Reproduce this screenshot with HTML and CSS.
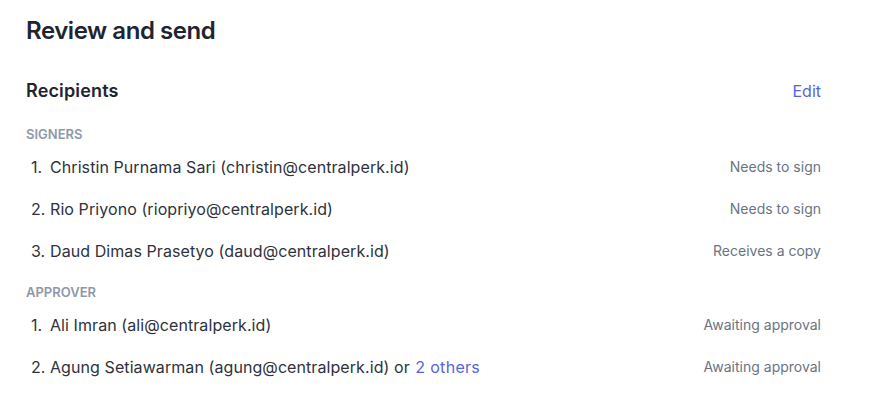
FILE: index.html
```html
<!DOCTYPE html>
<html>
<head>
<meta charset="utf-8">
<link rel="stylesheet" href="styles.css">
</head>
<body>
<main class="page">
  <h1 class="title">Review and send</h1>
  <section class="recipients">
    <div class="section-head">
      <h2 class="section-title">Recipients</h2>
      <a class="link edit">Edit</a>
    </div>
    <div class="group-label">Signers</div>
    <ol class="list">
      <li class="row"><span class="who"><span class="num">1.</span>Christin Purnama Sari (christin@centralperk.id)</span><span class="status">Needs to sign</span></li>
      <li class="row"><span class="who"><span class="num">2.</span>Rio Priyono (riopriyo@centralperk.id)</span><span class="status">Needs to sign</span></li>
      <li class="row"><span class="who"><span class="num">3.</span>Daud Dimas Prasetyo (daud@centralperk.id)</span><span class="status">Receives a copy</span></li>
    </ol>
    <div class="group-label second">Approver</div>
    <ol class="list">
      <li class="row"><span class="who"><span class="num">1.</span>Ali Imran (ali@centralperk.id)</span><span class="status">Awaiting approval</span></li>
      <li class="row"><span class="who"><span class="num">2.</span>Agung Setiawarman (agung@centralperk.id) or <a class="link others">2 others</a></span><span class="status">Awaiting approval</span></li>
    </ol>
  </section>
</main>
</body>
</html>
```

FILE: styles.css
```css
* { box-sizing: border-box; }
html, body { margin: 0; background: #fff; }
body {
  font-family: Inter, "Noto Sans", sans-serif;
  color: #2a2f3a;
}
.page {
  padding: 15px 49px 0 26px;
}
.title {
  margin: 0;
  font-size: 24px;
  line-height: 32px;
  font-weight: 600;
  color: #1f2530;
  letter-spacing: -0.45px;
}
.recipients { margin-top: 30px; }
.section-head {
  display: flex;
  justify-content: space-between;
  align-items: center;
  height: 28px;
}
.section-title {
  margin: 0;
  font-size: 18px;
  line-height: 28px;
  font-weight: 600;
  color: #1f2530;
  letter-spacing: 0.15px;
}
.link {
  color: #5563de;
  text-decoration: none;
  cursor: pointer;
}
.edit { font-size: 16px; line-height: 24px; }
.others { letter-spacing: 0.3px; margin-left: 1px; }
.group-label {
  margin-top: 19px;
  font-size: 13px;
  line-height: 20px;
  font-weight: 600;
  text-transform: uppercase;
  color: #8e98aa;
  margin-bottom: 2px;
}
.group-label.second { margin-top: 10px; margin-bottom: 2px; }
.list { list-style: none; margin: 0; padding: 0; }
.row {
  display: flex;
  justify-content: space-between;
  align-items: center;
  height: 42px;
}
.who {
  font-size: 16px;
  color: #2d323d;
  padding-left: 5px;
  letter-spacing: 0.08px;
}
.num { display: inline-block; width: 19px; }
.status {
  font-size: 14px;
  color: #6b7383;
  margin-bottom: 2px;
}
```
